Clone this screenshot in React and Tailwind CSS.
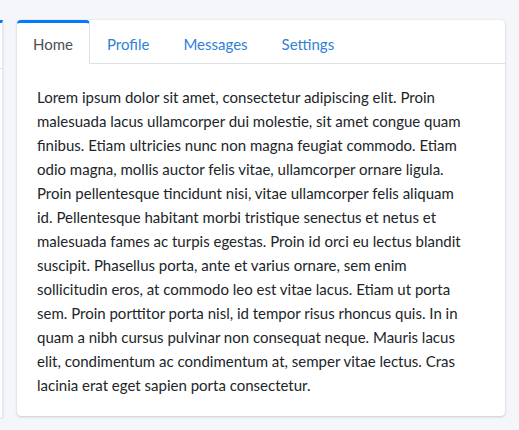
import React, { useState } from 'react';

const tabs = ['Home', 'Profile', 'Messages', 'Settings'];

const lines = [
    'Lorem ipsum dolor sit amet, consectetur adipiscing elit. Proin',
    'malesuada lacus ullamcorper dui molestie, sit amet congue quam',
    'finibus. Etiam ultricies nunc non magna feugiat commodo. Etiam',
    'odio magna, mollis auctor felis vitae, ullamcorper ornare ligula.',
    'Proin pellentesque tincidunt nisi, vitae ullamcorper felis aliquam',
    'id. Pellentesque habitant morbi tristique senectus et netus et',
    'malesuada fames ac turpis egestas. Proin id orci eu lectus blandit',
    'suscipit. Phasellus porta, ante et varius ornare, sem enim',
    'sollicitudin eros, at commodo leo est vitae lacus. Etiam ut porta',
    'sem. Proin porttitor porta nisl, id tempor risus rhoncus quis. In in',
    'quam a nibh cursus pulvinar non consequat neque. Mauris lacus',
    'elit, condimentum ac condimentum at, semper vitae lectus. Cras',
    'lacinia erat eget sapien porta consectetur.',
];

const App = () => {
    const [active, setActive] = useState('Home');

    return (
        <div className="min-h-screen w-[519px] bg-[#f4f6f9] flex gap-[14px] pt-5 overflow-hidden" style={{ fontFamily: 'Lato, "Noto Sans", sans-serif' }}>
            {/* carte voisine, coupée à gauche */}
            <div className="w-[3px] h-[397px] bg-white border-r border-[#e3e6ea] border-t-[3px] border-t-[#007bff] shadow-sm">
                <div className="mt-[45px] border-b border-[#dee2e6]" />
            </div>

            <div className="w-[488px] h-[396px] bg-white rounded-[4px] shadow-[0_0_1px_rgba(0,0,0,0.2),0_1px_3px_rgba(0,0,0,0.15)]">
                <div className="flex h-[44px] border-b border-[#dee2e6]">
                    {tabs.map((t) => (
                        <button
                            key={t}
                            onClick={() => setActive(t)}
                            className={
                                t === active
                                    ? 'h-[44px] px-4 pt-[2px] text-[15px] text-[#495057] bg-white border-t-[3px] border-t-[#007bff] border-r border-r-[#dee2e6] rounded-tl-[4px] rounded-tr-[4px]'
                                    : 'h-[44px] px-[17px] pt-[5px] text-[15px] text-[#2f80d9]'
                            }
                        >
                            {t}
                        </button>
                    ))}
                </div>
                <div className="px-5 pt-[21px] text-[15px] text-[#212529] whitespace-nowrap">
                    {lines.map((l, i) => (
                        <div key={i} className="h-[24px] leading-[24px]">{l}</div>
                    ))}
                </div>
            </div>
        </div>
    );
};

export default App;
